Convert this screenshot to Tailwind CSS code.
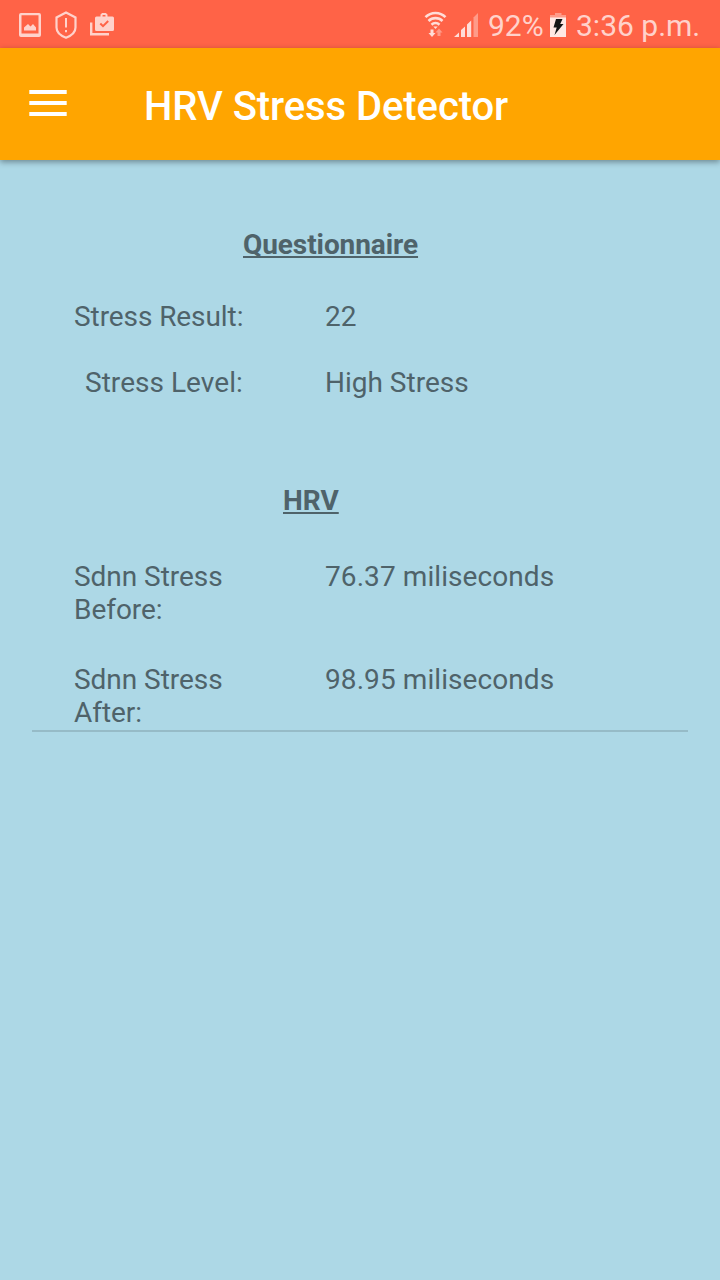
<!DOCTYPE html>
<html lang="en">
<head>
<meta charset="utf-8">
<title>HRV Stress Detector</title>
<script src="https://cdn.jsdelivr.net/npm/@tailwindcss/browser@4"></script>
</head>
<body class="w-[720px] h-[1280px] overflow-hidden bg-[#add8e6] font-['Roboto',sans-serif] text-[28px] leading-[33px] text-[#4f636a]">
<header class="h-12 bg-[#ff6347] flex items-start text-[#ffd2cb]">
  <svg class="w-[120px] h-12" viewBox="0 0 120 48" fill="none" stroke="currentColor">
    <path fill-rule="evenodd" d="M21 13h18q2 0 2 2v20q0 2-2 2H21q-2 0-2-2V15q0-2 2-2zM21.500 15.200v18.300h17V15.200z" fill="currentColor" stroke="none"/>
    <path d="M24 30.500v-3l4-3.500 2.500 2.500 2.500-2.500 3 3.500v3z" fill="currentColor" stroke="none"/>
    <path d="M66 12.500l9.500 5v10c0 5-5 8.500-9.500 10.200-4.500-1.700-9.500-5.200-9.500-10.200v-10z" stroke-width="2.200"/>
    <path d="M66 18v9.500M66 30v2.200" stroke-width="2"/>
    <path d="M91.200 22.500v11.800h17.800" stroke-width="2.400"/>
    <path d="M96.500 16.500h16a1.500 1.500 0 0 1 1.500 1.500v11.500a1.500 1.500 0 0 1-1.500 1.500h-16a1.500 1.500 0 0 1-1.500-1.500v-11.500a1.500 1.500 0 0 1 1.500-1.500z" fill="currentColor" stroke="none"/>
    <path d="M101.500 17v-2l1-1h3l1 1v2" stroke-width="2"/>
    <path d="M100.300 23.500l2.700 2.700 5.200-5.200" stroke="#ff6347" stroke-width="2"/>
  </svg>
  <svg class="w-[60px] h-12 ml-auto" viewBox="420 0 60 48" fill="none" stroke="currentColor">
    <path d="M425.500 17.200a14 14 0 0 1 20 0M428.500 21a10 10 0 0 1 14 0M431.500 24.700a6 6 0 0 1 8 0" stroke="#ffddd8" stroke-width="2.600"/>
    <path d="M433.300 26.500h4.400l-2.200 2.500z" fill="#ffddd8" stroke="none"/>
    <path d="M430.500 29.500h3v3.500h2l-3.500 4-3.500-4h2z" fill="#ffddd8" stroke="none"/>
    <path d="M437.500 36h3v-3.500h2l-3.500-4-3.500 4h2z" fill="#ff9b89" stroke="none"/>
    <path d="M454 37l5-4.500v4.500zM461 37v-7l4-3.500v10.500zM467 37v-12.500l4.200-4v16.500z" fill="#ffddd8" stroke="none"/>
    <path d="M473.500 37v-19.500l4.500-4.500v24z" fill="#ff9b89" stroke="none"/>
  </svg>
  <span class="w-[56px] ml-2 mt-2 text-[30px] leading-[35px]">92%</span>
  <svg class="w-[18px] h-12 ml-[5px]" viewBox="549 0 18 48">
    <path d="M550 18v-3h5v-2h6.500v2h4.500v3z" fill="#ff9b89"/>
    <path d="M550 17.500h16v19.500h-16z" fill="#ffe8e4"/>
    <path d="M556 19h6.500l-2.300 5h3.300l-9 11 2.200-7.500h-3.200z" fill="#151515"/>
  </svg>
  <span class="w-[144px] ml-[9px] mt-2 text-[30px] leading-[35px] whitespace-nowrap">3:36 p.m.</span>
</header>
<nav class="relative h-28 bg-[#ffa500] shadow-[0_2px_6px_rgba(0,0,0,0.38)] flex items-start text-white">
  <svg class="w-[38px] h-[26px] mt-[42px] ml-[29px]" viewBox="0 0 38 26" fill="currentColor"><path d="M.3 0h37.400v4H.3zM.3 11h37.400v4H.3zM.3 22h37.400v4H.3z"/></svg>
  <h1 class="ml-[77px] mt-[35px] text-[40px] leading-[47px] font-medium tracking-[-0.08px] whitespace-nowrap">HRV Stress Detector</h1>
</nav>
<main class="mx-8 h-[572px] border-b-2 border-[#96bbc7] pt-[68px]">
  <h2 class="ml-[211px] font-bold tracking-[-0.08px] underline [text-decoration-skip-ink:none] decoration-[1.500px] underline-offset-[2px]">Questionnaire</h2>
  <dl class="mt-[39px] grid grid-cols-[211px_1fr] gap-x-[82px] gap-y-[33px]">
    <dt class="pl-[42px] whitespace-nowrap tracking-[-0.08px]">Stress Result:</dt><dd>22</dd>
    <dt class="pl-[53px] whitespace-nowrap tracking-[0.04px]">Stress Level:</dt><dd>High Stress</dd>
  </dl>
  <h2 class="ml-[251px] mt-[85px] font-bold underline [text-decoration-skip-ink:none] decoration-[1.500px] underline-offset-[2px]">HRV</h2>
  <dl class="mt-[43px] grid grid-cols-[211px_1fr] gap-x-[82px] gap-y-[37px]">
    <dt class="pl-[42px] tracking-[-0.04px]">Sdnn Stress<br>Before:</dt><dd class="tracking-[0.08px]">76.37 miliseconds</dd>
    <dt class="pl-[42px] tracking-[-0.04px]">Sdnn Stress<br>After:</dt><dd class="tracking-[0.08px]">98.95 miliseconds</dd>
  </dl>
</main>
</body>
</html>
